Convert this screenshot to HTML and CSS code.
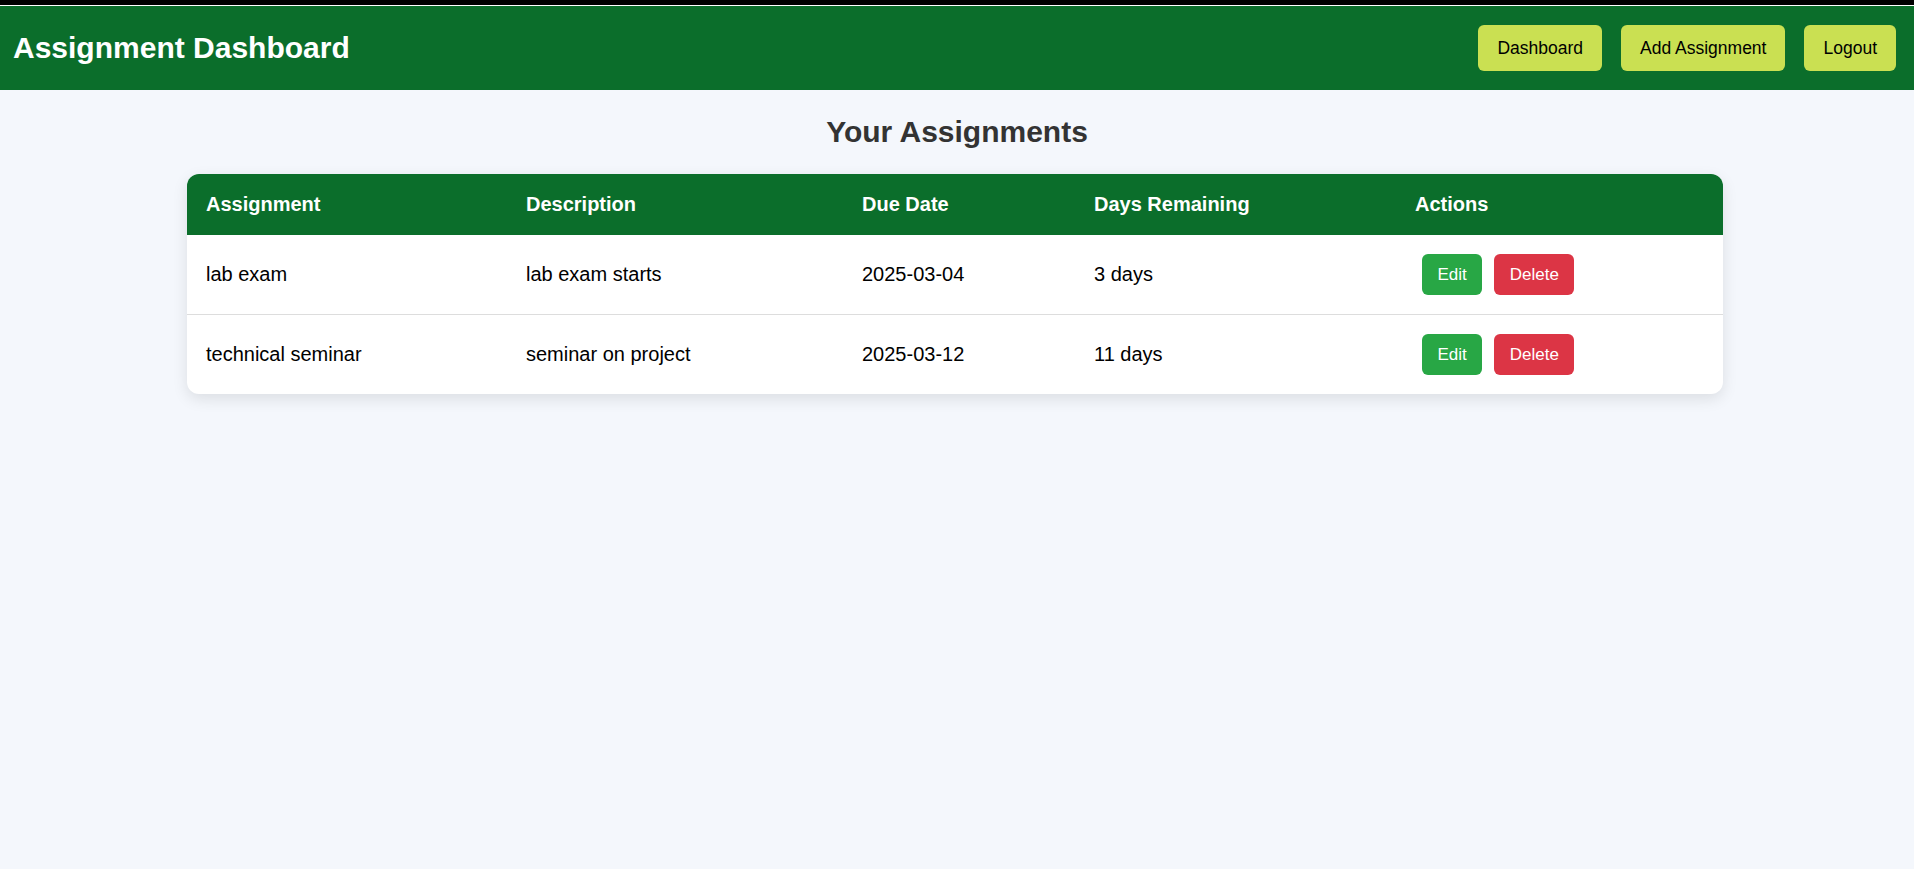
FILE: index.html
```html
<!DOCTYPE html>
<html lang="en">
<head>
<meta charset="utf-8">
<title>Assignment Dashboard</title>
<link rel="stylesheet" href="styles.css">
</head>
<body>
<div class="topstrip"></div>
<header class="navbar">
  <h1 class="brand">Assignment Dashboard</h1>
  <nav class="nav-links">
    <button class="nav-btn">Dashboard</button>
    <button class="nav-btn">Add Assignment</button>
    <button class="nav-btn">Logout</button>
  </nav>
</header>
<main class="content">
  <h2 class="page-title">Your Assignments</h2>
  <div class="table-card">
    <table class="assign-table">
      <colgroup>
        <col class="c1"><col class="c2"><col class="c3"><col class="c4"><col class="c5">
      </colgroup>
      <thead>
        <tr>
          <th>Assignment</th>
          <th>Description</th>
          <th>Due Date</th>
          <th>Days Remaining</th>
          <th>Actions</th>
        </tr>
      </thead>
      <tbody>
        <tr>
          <td>lab exam</td>
          <td>lab exam starts</td>
          <td>2025-03-04</td>
          <td>3 days</td>
          <td><button class="btn btn-edit">Edit</button><button class="btn btn-delete">Delete</button></td>
        </tr>
        <tr>
          <td>technical seminar</td>
          <td>seminar on project</td>
          <td>2025-03-12</td>
          <td>11 days</td>
          <td><button class="btn btn-edit">Edit</button><button class="btn btn-delete">Delete</button></td>
        </tr>
      </tbody>
    </table>
  </div>
</main>
</body>
</html>
```

FILE: styles.css
```css
* { box-sizing: border-box; }

html, body {
  margin: 0;
  padding: 0;
}

body {
  font-family: "Liberation Sans", Arial, sans-serif;
  background: #f4f7fc;
  color: #000;
  min-height: 869px;
}

.topstrip {
  height: 6px;
  background: #000;
  border-bottom: 1px solid #ffffff;
}

.navbar {
  height: 84px;
  background: #0b6e2b;
  display: flex;
  align-items: center;
  justify-content: space-between;
  padding: 0 18px 0 13px;
}

.brand {
  margin: 0;
  color: #fff;
  font-size: 30px;
  font-weight: bold;
  line-height: 34px;
}

.nav-links {
  display: flex;
  gap: 19px;
}

.nav-btn {
  height: 46px;
  padding: 0 19px;
  border: none;
  border-radius: 6px;
  background: #cae052;
  color: #000;
  font-family: "Liberation Sans", Arial, sans-serif;
  font-size: 17.5px;
  cursor: pointer;
}

.content {
  padding-top: 25px;
}

.page-title {
  margin: 0 0 25px;
  text-align: center;
  color: #333;
  font-size: 30px;
  font-weight: bold;
  line-height: 34px;
}

.table-card {
  width: 1536px;
  margin: 0 0 0 187px;
  background: #fff;
  border-radius: 12px;
  overflow: hidden;
  box-shadow: 0 5px 15px rgba(0, 0, 0, 0.1);
}

.assign-table {
  width: 100%;
  border-collapse: separate;
  border-spacing: 0;
  table-layout: fixed;
}

.c1 { width: 320px; }
.c2 { width: 336px; }
.c3 { width: 232px; }
.c4 { width: 321px; }
.c5 { width: 327px; }

.assign-table th {
  height: 61px;
  padding: 0 19px;
  background: #0b6e2b;
  color: #fff;
  font-size: 20px;
  font-weight: bold;
  text-align: left;
  vertical-align: middle;
}

.assign-table td {
  height: 80px;
  padding: 0 19px;
  font-size: 20px;
  vertical-align: middle;
  text-align: left;
}

.assign-table tbody tr:first-child td {
  border-bottom: 1px solid #dddddd;
}

.assign-table tbody tr:last-child td {
  height: 79px;
}

.btn {
  height: 41px;
  margin: 0 6px;
  padding: 0 15.5px;
  border: none;
  border-radius: 6px;
  color: #fff;
  font-family: "Liberation Sans", Arial, sans-serif;
  font-size: 17px;
  vertical-align: middle;
  cursor: pointer;
}

.btn:first-child { margin-left: 7px; }

.btn-edit { background: #28a745; }
.btn-delete { background: #dc3545; }
```
